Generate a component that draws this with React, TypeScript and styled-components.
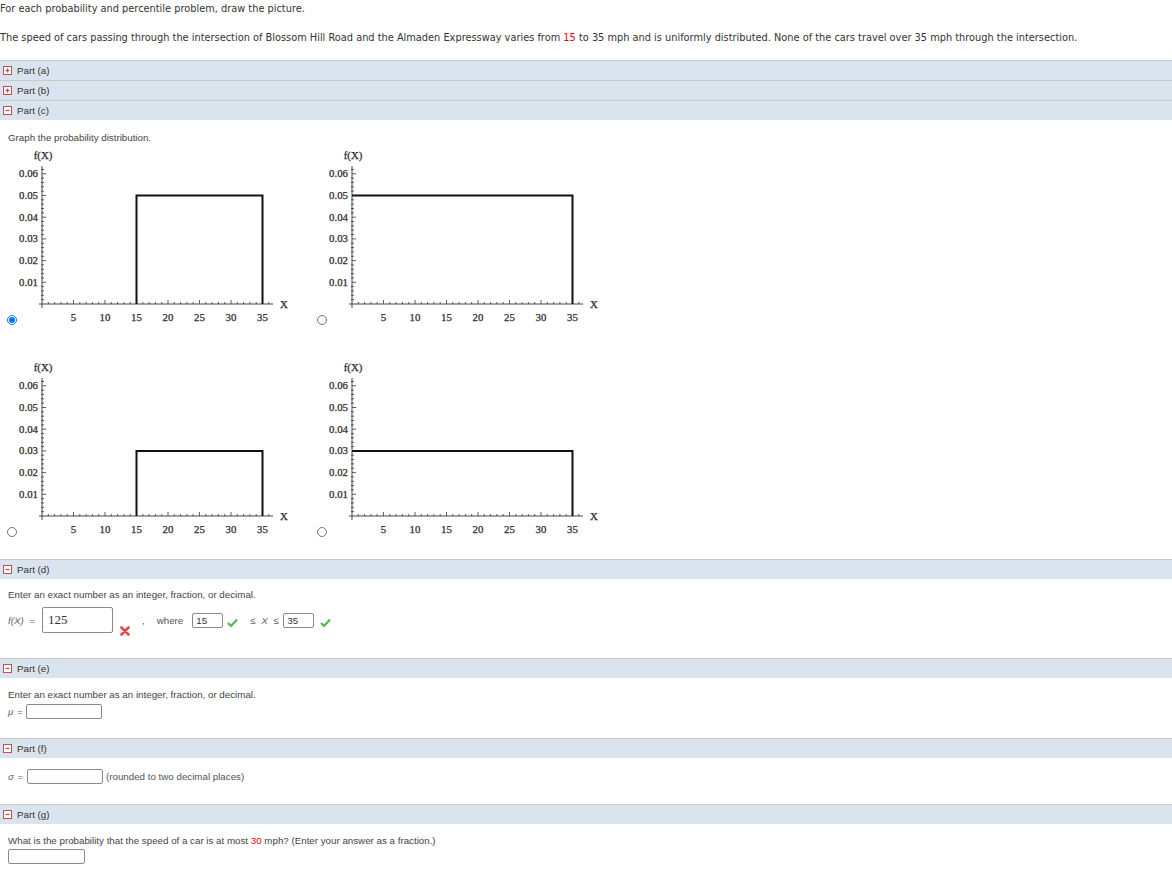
import React from "react"
import styled, { createGlobalStyle } from "styled-components"

const GlobalStyle = createGlobalStyle`
  html, body { margin: 0; padding: 0; background: #fff; }
  body { font-family: "Liberation Sans", Arial, sans-serif; font-size: 9.75px; color: #333; }
`

const Page = styled.div`
  width: 1172px;
  padding-top: 1px;
`

const Intro = styled.p<{ $gap?: number }>`
  margin: ${(p) => p.$gap || 0}px 0 0 0;
  font-family: "DejaVu Sans", Verdana, sans-serif;
  font-size: 9.8px;
  line-height: 16px;
  color: #333;
`

const Red = styled.span`
  color: #e00;
`

const HeaderRow = styled.div`
  display: flex;
  align-items: center;
  gap: 5px;
  height: 19px;
  padding-left: 3px;
  border-top: 1px solid #c9c9c9;
  background: #dae4ee;
  color: #333;
`

const Section = styled.div<{ $top: number; $bottom: number }>`
  padding: ${(p) => p.$top}px 8px ${(p) => p.$bottom}px 8px;
`

const Text = styled.div<{ $mb?: number }>`
  line-height: 12px;
  margin-bottom: ${(p) => p.$mb || 0}px;
  color: #444;
`

const GraphGrid = styled.div`
  display: grid;
  grid-template-columns: 310px 310px;
  row-gap: 30px;
  margin-left: -8px;
`

const GraphCell = styled.label`
  display: flex;
  align-items: flex-end;
`

const Radio = styled.input`
  width: 10px;
  height: 10px;
  margin: 0 0 3px 7px;
  flex: none;
`

const Plot = styled.svg`
  margin-left: 2px;
  flex: none;
`

const AnswerRow = styled.div<{ $mt?: number }>`
  display: flex;
  align-items: center;
  margin-top: ${(p) => p.$mt || 0}px;
  color: #555;
`

const MathLabel = styled.span<{ $w?: number; $ml?: number; $ws?: number }>`
  width: ${(p) => (p.$w ? p.$w + "px" : "auto")};
  margin-left: ${(p) => p.$ml || 0}px;
  font-style: italic;
  color: #666;
  white-space: nowrap;
  flex: none;
  word-spacing: ${(p) => p.$ws || 1}px;
`

const Eq = styled.span`
  font-style: normal;
`

const Box = styled.div<{ $w: number; $h: number; $serif?: boolean; $ml?: number }>`
  box-sizing: border-box;
  width: ${(p) => p.$w}px;
  height: ${(p) => p.$h}px;
  margin-left: ${(p) => p.$ml || 0}px;
  border: 1px solid #8a8a8a;
  border-radius: 2px;
  background: #fff;
  display: flex;
  align-items: center;
  padding-left: ${(p) => (p.$serif ? 5 : 3)}px;
  font-family: ${(p) => (p.$serif ? '"Liberation Serif", "Times New Roman", serif' : '"Liberation Sans", Arial, sans-serif')};
  font-size: ${(p) => (p.$serif ? 13 : 9.75)}px;
  color: #333;
  flex: none;
`

const Mark = styled.svg<{ $ml: number; $drop?: number }>`
  margin-left: ${(p) => p.$ml}px;
  flex: none;
  position: relative;
  top: ${(p) => p.$drop || 0}px;
`

const Word = styled.span<{ $ml: number }>`
  margin-left: ${(p) => p.$ml}px;
  flex: none;
`

const Note = styled.span`
  margin-left: 3px;
  color: #555;
`

const ToggleIcon = ({ open }: { open: boolean }) => (
  <svg width="9" height="9" viewBox="0 0 9 9">
    <rect x="0.5" y="0.5" width="8" height="8" fill="#fff" stroke="#c0504d" />
    <line x1="2.5" y1="4.5" x2="6.5" y2="4.5" stroke="#c0504d" strokeWidth="1.3" />
    {!open && <line x1="4.5" y1="2.5" x2="4.5" y2="6.5" stroke="#c0504d" strokeWidth="1.3" />}
  </svg>
)

const Header = ({ label, open }: { label: string; open: boolean }) => (
  <HeaderRow>
    <ToggleIcon open={open} />
    <span>{label}</span>
  </HeaderRow>
)

const Check = ({ ml }: { ml: number }) => (
  <Mark $ml={ml} $drop={2} width="11" height="9" viewBox="0 0 11 9">
    <path d="M1 5 L4 8 L10 1.5" fill="none" stroke="#5cb85c" strokeWidth="2.4" strokeLinejoin="round" />
  </Mark>
)

const Cross = ({ ml }: { ml: number }) => (
  <Mark $ml={ml} $drop={11} width="10" height="10" viewBox="0 0 10 10">
    <path d="M1.5 1.5 L8.5 8.5 M8.5 1.5 L1.5 8.5" stroke="#e8474a" strokeWidth="2.6" strokeLinecap="round" />
  </Mark>
)

// plot geometry
const X0 = 23
const Y0 = 158
const SX = 6.3
const SY = 2170
const px = (v: number) => X0 + v * SX
const py = (v: number) => Y0 - v * SY

const serif = '"Liberation Serif", "Times New Roman", serif'

const Graph = ({ from, level }: { from: number; level: number }) => {
  const yTicks = []
  for (let i = 1; i <= 31; i++) {
    const y = py(i * 0.002)
    const major = i % 5 === 0
    yTicks.push(<line key={"y" + i} x1={X0 - (major ? 0 : 1)} y1={y} x2={X0 + (major ? 4 : 2)} y2={y} stroke="#333" strokeWidth="0.8" />)
  }
  const xTicks = []
  for (let i = 1; i <= 36; i++) {
    const x = px(i)
    const major = i % 5 === 0
    xTicks.push(<line key={"x" + i} x1={x} y1={Y0} x2={x} y2={Y0 - (major ? 4 : 2)} stroke="#333" strokeWidth="0.8" />)
  }
  const pts =
    from > 0
      ? `${px(from)},${Y0} ${px(from)},${py(level)} ${px(35)},${py(level)} ${px(35)},${Y0}`
      : `${px(0)},${py(level)} ${px(35)},${py(level)} ${px(35)},${Y0}`
  return (
    <Plot width="285" height="182" viewBox="0 0 285 182">
      <g fontFamily={serif} fontSize="10.8" fill="#2a2a2a" stroke="#2a2a2a" strokeWidth="0.25">
        <text x={X0 + 1} y="13" textAnchor="middle">f(X)</text>
        {[1, 2, 3, 4, 5, 6].map((i) => (
          <text key={i} x={X0 - 4} y={py(i / 100) + 3.5} textAnchor="end">
            {"0.0" + i}
          </text>
        ))}
        {[5, 10, 15, 20, 25, 30, 35].map((v) => (
          <text key={v} x={px(v)} y="175" textAnchor="middle">
            {v}
          </text>
        ))}
        <text x="265" y="162" textAnchor="middle">X</text>
      </g>
      <line x1={X0} y1="20" x2={X0} y2={Y0 + 4} stroke="#333" strokeWidth="0.9" />
      <line x1={X0 - 3} y1={Y0} x2="254" y2={Y0} stroke="#333" strokeWidth="0.9" />
      {yTicks}
      {xTicks}
      <polyline points={pts} fill="none" stroke="#111" strokeWidth="2" />
    </Plot>
  )
}

const options = [
  { from: 15, level: 0.05, checked: true },
  { from: 0, level: 0.05, checked: false },
  { from: 15, level: 0.03, checked: false },
  { from: 0, level: 0.03, checked: false },
]

export default function App() {
  return (
    <Page>
      <GlobalStyle />
      <Intro>For each probability and percentile problem, draw the picture.</Intro>
      <Intro $gap={13}>
        The speed of cars passing through the intersection of Blossom Hill Road and the Almaden Expressway varies from{" "}
        <Red>15</Red> to 35 mph and is uniformly distributed. None of the cars travel over 35 mph through the
        intersection.
      </Intro>
      <div style={{ height: 14 }} />

      <Header label="Part (a)" open={false} />
      <Header label="Part (b)" open={false} />
      <Header label="Part (c)" open={true} />
      <Section $top={12} $bottom={19}>
        <Text $mb={2}>Graph the probability distribution.</Text>
        <GraphGrid>
          {options.map((o, i) => (
            <GraphCell key={i}>
              <Radio type="radio" name="graph" defaultChecked={o.checked} />
              <Graph from={o.from} level={o.level} />
            </GraphCell>
          ))}
        </GraphGrid>
      </Section>

      <Header label="Part (d)" open={true} />
      <Section $top={10} $bottom={25}>
        <Text>Enter an exact number as an integer, fraction, or decimal.</Text>
        <AnswerRow $mt={6}>
          <MathLabel $w={34} $ws={3}>
            f(X) <Eq>=</Eq>
          </MathLabel>
          <Box $w={71} $h={26} $serif>
            125
          </Box>
          <Cross ml={7} />
          <Word $ml={12}>,</Word>
          <Word $ml={12}>where</Word>
          <Box $w={31} $h={15} $ml={9}>
            15
          </Box>
          <Check ml={4} />
          <MathLabel $w={33} $ml={12} $ws={3}>
            <Eq>≤</Eq> X <Eq>≤</Eq>
          </MathLabel>
          <Box $w={31} $h={15}>
            35
          </Box>
          <Check ml={6} />
        </AnswerRow>
      </Section>

      <Header label="Part (e)" open={true} />
      <Section $top={11} $bottom={19}>
        <Text>Enter an exact number as an integer, fraction, or decimal.</Text>
        <AnswerRow $mt={3}>
          <MathLabel $w={18}>
            μ <Eq>=</Eq>
          </MathLabel>
          <Box $w={76} $h={15} />
        </AnswerRow>
      </Section>

      <Header label="Part (f)" open={true} />
      <Section $top={11} $bottom={20}>
        <AnswerRow>
          <MathLabel $w={19}>
            σ <Eq>=</Eq>
          </MathLabel>
          <Box $w={76} $h={15} />
          <Note>(rounded to two decimal places)</Note>
        </AnswerRow>
      </Section>

      <Header label="Part (g)" open={true} />
      <Section $top={11} $bottom={10}>
        <Text>
          What is the probability that the speed of a car is at most <Red>30</Red> mph? (Enter your answer as a fraction.)
        </Text>
        <AnswerRow $mt={2}>
          <Box $w={77} $h={15} />
        </AnswerRow>
      </Section>
    </Page>
  )
}
